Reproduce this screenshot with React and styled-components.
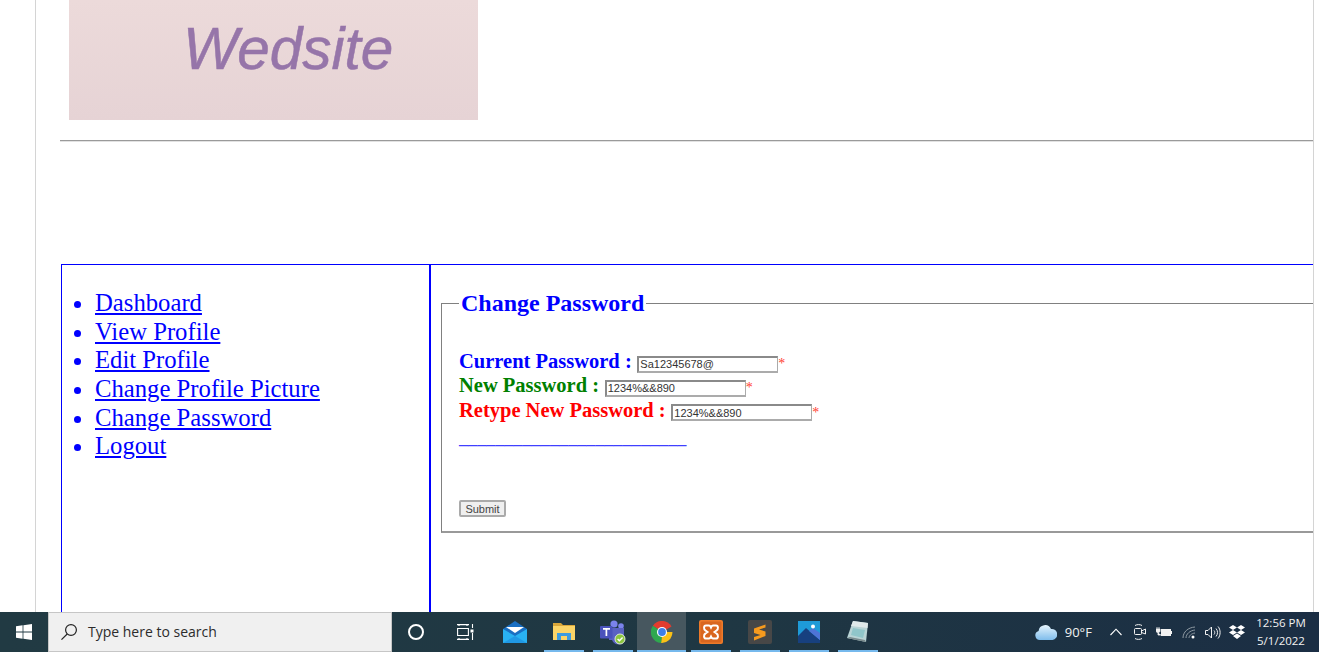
import styled, { createGlobalStyle } from 'styled-components';

const GlobalStyle = createGlobalStyle`
	html, body {
		margin: 0;
		padding: 0;
		height: 100%;
		overflow: hidden;
		background: #fff;
	}
`;

const Screen = styled.div`
	width: 1319px;
	height: 652px;
	display: flex;
	flex-direction: column;
	overflow: hidden;
	font-family: 'Liberation Serif', 'Times New Roman', serif;
`;

const Frame = styled.main`
	flex: 1;
	min-height: 0;
	width: 1277px;
	margin-left: 35px;
	border-left: 1px solid #d4d4d4;
	border-right: 1px solid #d4d4d4;
	overflow: hidden;
	display: flex;
	flex-direction: column;
`;

const Banner = styled.div`
	width: 409px;
	height: 120px;
	margin-left: 33px;
	padding: 13px 0 0 114px;
	box-sizing: border-box;
	flex-shrink: 0;
	background: linear-gradient(180deg, #ecdada 0%, #e6d3d5 100%);
	color: #9675a9;
	font: italic 58.5px/72px 'Liberation Sans', Arial, sans-serif;
	-webkit-text-stroke: 0.5px #9675a9;
	filter: blur(0.6px);
`;

const Rule = styled.hr`
	flex-shrink: 0;
	width: 100%;
	margin: 20px 0 0 24px;
	border: none;
	border-top: 1px solid #9a9a9a;
	border-bottom: 1px solid #e2e2e2;
`;

const Board = styled.div`
	flex: 1;
	min-height: 0;
	margin: 122px 0 0 25px;
	border-top: 1px solid #0000ff;
	border-left: 1px solid #0000ff;
	display: flex;
`;

const Menu = styled.nav`
	width: 367px;
	flex-shrink: 0;
	border-right: 2px solid #0000ff;
`;

const MenuList = styled.ul`
	margin: 24px 0 0;
	padding: 0 0 0 33px;
	color: #0000ff;
	font-size: 24.7px;
	line-height: 28.65px;
`;

const MenuLink = styled.a`
	color: #0000ff;
	text-decoration: underline;
`;

const Content = styled.section`
	flex: 1;
	min-width: 0;
	overflow: hidden;
	padding: 25px 0 0 10px;
`;

const PasswordSet = styled.fieldset`
	width: 1000px;
	height: 243px;
	margin: 0;
	padding: 32px 0 0 17px;
	box-sizing: border-box;
	border: 1px solid #808080;
	border-bottom: 2px solid #999;
`;

const Legend = styled.legend`
	padding: 0 2px;
	color: #0000ff;
	font-size: 24px;
	font-weight: bold;
	line-height: 27px;
`;

const Row = styled.div`
	height: 24.4px;
	white-space: nowrap;
	color: ${(p) => p.$color};
	font-size: 20.5px;
	font-weight: bold;
	line-height: 24.4px;
`;

const PasswordInput = styled.input`
	width: 141px;
	height: 17px;
	box-sizing: border-box;
	margin: 0 0 0 0.5px;
	padding: 0 1px;
	border-width: 2px 1px 2px 2px;
	border-style: solid;
	border-color: #8a8a8a #ababab #ababab #8a8a8a;
	background: #fff;
	color: #333;
	font: 11px 'Liberation Sans', Arial, sans-serif;
	vertical-align: 0;
`;

const Star = styled.span`
	color: #ff4030;
	font-size: 14px;
	font-weight: normal;
`;

const Underline = styled.div`
	margin-top: 6px;
	color: #4040ff;
	font-size: 18.2px;
	font-weight: bold;
	line-height: 20px;
`;

const SubmitButton = styled.button`
	display: block;
	width: 47px;
	height: 17px;
	margin-top: 52px;
	padding: 0;
	border: 2px solid #aaa;
	border-radius: 2px;
	background: #efefef;
	color: #444;
	font: 11px 'Liberation Sans', Arial, sans-serif;
`;

const Taskbar = styled.footer`
	height: 40px;
	flex-shrink: 0;
	display: flex;
	align-items: stretch;
	background: linear-gradient(90deg, #213a43 0%, #1f3743 55%, #1b2e44 100%);
	color: #fff;
	font-family: 'Open Sans', 'Noto Sans', sans-serif;
`;

const StartButton = styled.div`
	width: 48px;
	display: flex;
	align-items: center;
	justify-content: center;
`;

const SearchBox = styled.div`
	width: 344px;
	box-sizing: border-box;
	display: flex;
	align-items: center;
	gap: 10px;
	padding: 0 0 1px 11px;
	background: #f0f0f0;
	border: 1px solid #c6c6c6;
	color: #2c2c2c;
	font-size: 14px;
`;

const TaskIcon = styled.div`
	position: relative;
	width: 49px;
	display: flex;
	align-items: center;
	justify-content: center;
	background: ${(p) => (p.$active ? '#47575f' : 'transparent')};
	&::after {
		content: '';
		display: ${(p) => (p.$open ? 'block' : 'none')};
		position: absolute;
		bottom: 0;
		left: ${(p) => (p.$active ? '0' : '5px')};
		right: ${(p) => (p.$active ? '0' : '4px')};
		height: 2px;
		background: #76b9ed;
	}
`;

const CortanaRing = styled.div`
	width: 12px;
	height: 12px;
	margin-right: 1px;
	border: 2px solid #fff;
	border-radius: 50%;
`;

const Tray = styled.div`
	margin-left: auto;
	display: flex;
	align-items: center;
	padding-right: 6px;
	color: #f2f2f2;
`;

const TrayIcon = styled.div`
	width: 24.2px;
	display: flex;
	align-items: center;
	justify-content: center;
`;

const Weather = styled.div`
	display: flex;
	align-items: center;
	gap: 8px;
	margin-right: 12px;
	font-size: 13px;
`;

const Clock = styled.div`
	width: 64px;
	font-size: 11.5px;
	line-height: 18px;
	text-align: center;
`;

const links = ['Dashboard', 'View Profile', 'Edit Profile', 'Change Profile Picture', 'Change Password', 'Logout'];

const fields = [
	{ label: 'Current Password :', value: 'Sa12345678@', color: '#0000ff' },
	{ label: 'New Password :', value: '1234%&&890', color: '#008000' },
	{ label: 'Retype New Password :', value: '1234%&&890', color: '#ff0000' },
];

const WindowsLogo = () => (
	<svg width="16" height="16" viewBox="0 0 16 16" fill="#fff">
		<path d="M0 2.3 6.6 1.3V7.6H0zM7.4 1.2 16 0V7.6H7.4zM0 8.4H6.6V14.7L0 13.7zM7.4 8.4H16V16L7.4 14.8z" />
	</svg>
);

const SearchIcon = () => (
	<svg width="18" height="18" viewBox="0 0 18 18" fill="none" stroke="#222" strokeWidth="1.2">
		<circle cx="11" cy="7" r="5.4" />
		<path d="M7.2 11 1.5 16.6" />
	</svg>
);

const TaskViewIcon = () => (
	<svg width="17" height="16" viewBox="0 0 17 16" fill="none" stroke="#fff" strokeWidth="1.1">
		<path d="M0 .6H12M2 .6V2M10 .6V2M.6 4.5H11.4V11.5H.6zM0 15.4H12M2 14V15.4M10 14V15.4M15.5 0V4M15.5 9V16" />
		<rect x="13.5" y="5.5" width="3" height="3" fill="#fff" stroke="none" />
	</svg>
);

const MailIcon = () => (
	<svg width="24" height="22" viewBox="0 0 24 22">
		<path d="M12 0 24 8V22H0V8z" fill="#1a6fc2" />
		<path d="M0 8 12 15 24 8V22H0z" fill="#29b2f2" />
		<path d="M3 6H21L12 12z" fill="#fff" />
		<path d="M0 22 12 15 24 22z" fill="#1c8fe0" opacity=".7" />
	</svg>
);

const FolderIcon = () => (
	<svg width="22" height="18" viewBox="0 0 22 18">
		<path d="M0 0H8L10 2H22V17H0z" fill="#d9a63a" />
		<rect y="3" width="22" height="14" fill="#fbd467" />
		<path d="M4 17V10H18V17H14V13H8V17z" fill="#3d9be0" />
	</svg>
);

const TeamsIcon = () => (
	<svg width="26" height="26" viewBox="0 0 26 26">
		<circle cx="21" cy="7" r="2.8" fill="#7b83eb" />
		<circle cx="14" cy="5" r="3.6" fill="#7b83eb" />
		<path d="M9 9H24V17A6 6 0 0 1 12 21H9z" fill="#5a62c3" />
		<rect y="7" width="12.5" height="12.5" rx="1" fill="#4b53bc" />
		<path d="M3 9.8H10M6.4 9.8V17" stroke="#fff" strokeWidth="1.7" />
		<circle cx="20" cy="20" r="5" fill="#8cc63f" stroke="#dfe8d8" />
		<path d="M17.6 20 19.4 21.8 22.6 18.5" fill="none" stroke="#fff" strokeWidth="1.4" />
	</svg>
);

const ChromeIcon = () => (
	<svg width="22" height="22" viewBox="0 0 48 48">
		<path d="M24 24 44.8 12A24 24 0 0 0 4.2 10.2z" fill="#e33b2e" />
		<path d="M24 24H46.8A24 24 0 0 1 22 48z" fill="#fbc116" />
		<path d="M24 24 22 48A24 24 0 0 1 4.2 10.2z" fill="#2fa84f" />
		<circle cx="24" cy="24" r="11" fill="#fff" />
		<circle cx="24" cy="24" r="8.5" fill="#3f7fe8" />
	</svg>
);

const XamppIcon = () => (
	<svg width="24" height="24" viewBox="0 0 24 24">
		<rect width="24" height="24" rx="2" fill="#ed7a2a" />
		<rect x="1.5" y="1.5" width="21" height="21" rx="1.5" fill="#d9661f" />
		<path d="M7 5.500H10C11.200 5.500 11.500 6.500 12 7.500 12.500 6.500 12.800 5.500 14 5.500H17C19.500 5.500 19.500 9.500 17.500 10.500L15.500 12 17.500 13.500C19.500 14.500 19.500 18.500 17 18.500H14C12.800 18.500 12.500 17.500 12 16.500 11.500 17.500 11.200 18.500 10 18.500H7C4.500 18.500 4.500 14.500 6.500 13.500L8.500 12 6.500 10.500C4.500 9.500 4.500 5.500 7 5.500Z" fill="none" stroke="#fff" strokeWidth="2" />
	</svg>
);

const SublimeIcon = () => (
	<svg width="24" height="24" viewBox="0 0 24 24">
		<rect width="24" height="24" rx="2" fill="#474747" />
		<path d="M17.500 4.500 6 8.500V12.500L17.500 16.500V20L6 16V13L14 15.500 6 12.500" fill="none" />
		<path d="M17.500 4.500 6 8.500V13L12.500 15 6 17V20.500L17.500 16V11.500L11 9.500 17.500 7.500z" fill="#f79a1e" />
	</svg>
);

const PhotosIcon = () => (
	<svg width="22" height="22" viewBox="0 0 22 22">
		<rect width="22" height="22" fill="#1e9bd8" />
		<path d="M0 15 8 7 22 19V22H0z" fill="#17407f" />
		<path d="M11 10 15 7 22 12V19z" fill="#4e74d6" />
		<circle cx="15" cy="5.5" r="2" fill="#fff" />
	</svg>
);

const NotesIcon = () => (
	<svg width="24" height="24" viewBox="0 0 24 24">
		<path d="M7 1 22 3 20 22 1 18z" fill="#b8d4d6" />
		<path d="M7 1 22 3 21.5 8 5 6z" fill="#dfe9ea" />
		<path d="M4 17 19 20 20 22 1 18z" fill="#7a8a8d" />
		<path d="M7 8 19 10 17 18 5 15z" fill="#7fc0c4" opacity=".7" />
	</svg>
);

const CloudIcon = () => (
	<svg width="22" height="16" viewBox="0 0 22 16">
		<defs>
			<linearGradient id="cloudFill" x1="0" y1="0" x2="0" y2="1">
				<stop offset="0" stopColor="#e4f3fc" />
				<stop offset="1" stopColor="#7fbdec" />
			</linearGradient>
		</defs>
		<path d="M5 16A4.6 4.6 0 0 1 3.600 7 6.500 6.500 0 0 1 16 5 5.400 5.400 0 0 1 17.500 16z" fill="url(#cloudFill)" />
	</svg>
);

const ChevronIcon = () => (
	<svg width="12" height="8" viewBox="0 0 12 8" fill="none" stroke="#fff" strokeWidth="1.1">
		<path d="M.5 7 6 1.200 11.500 7" />
	</svg>
);

const MeetIcon = () => (
	<svg width="12" height="16" viewBox="0 0 12 16" fill="none" stroke="#f2f2f2" strokeWidth="1">
		<rect x=".5" y="4.500" width="7" height="6" rx="1" />
		<path d="M7.500 7 11.500 5V10L7.500 8.500M1 1.500C3 .3 6 .3 8 1.500M1 14.500C3 15.700 6 15.700 8 14.500" />
	</svg>
);

const BatteryIcon = () => (
	<svg width="16" height="10" viewBox="0 0 16 10">
		<path d="M1 0V2M3 0V2M0 2H4V4C4 5 3 5.500 2 5.500 1 5.500 0 5 0 4zM2 5.500V8H5" fill="#f2f2f2" stroke="#f2f2f2" strokeWidth=".8" />
		<rect x="5.500" y="2.500" width="9" height="6" fill="#f2f2f2" stroke="#f2f2f2" />
		<rect x="15" y="4" width="1" height="3" fill="#f2f2f2" />
	</svg>
);

const WifiIcon = () => (
	<svg width="14" height="13" viewBox="0 0 14 13" fill="none" stroke="#8f9aa3" strokeWidth="1">
		<path d="M1 12C1 6 6 1.500 13 1M4 12C4 8 8 4.500 13 4M7 12C7 10 9 7.500 13 7" />
		<circle cx="11" cy="11" r="1.500" fill="#fff" stroke="none" />
	</svg>
);

const VolumeIcon = () => (
	<svg width="16" height="13" viewBox="0 0 16 13" fill="none" stroke="#f2f2f2" strokeWidth="1">
		<path d="M.5 4.500H3L6.500 1V12L3 8.500H.5zM9 4.500C10 5.500 10 7.500 9 8.500M11 2.500C13 4.500 13 8.500 11 10.500M13 .5C15.800 3.500 15.800 9.500 13 12.500" />
	</svg>
);

const DropboxIcon = () => (
	<svg width="16" height="14" viewBox="0 0 16 14" fill="#fff">
		<path d="M4 0 8 2.500 4 5 0 2.500zM12 0 16 2.500 12 5 8 2.500zM0 7.500 4 5 8 7.500 4 10zM12 5 16 7.500 12 10 8 7.500zM4 11 8 8.500 12 11 8 14z" />
	</svg>
);

const App = () => (
	<Screen>
		<GlobalStyle />
		<Frame>
			<Banner>Wedsite</Banner>
			<Rule />
			<Board>
				<Menu>
					<MenuList>
						{links.map((link) => (
							<li key={link}>
								<MenuLink href="#">{link}</MenuLink>
							</li>
						))}
					</MenuList>
				</Menu>
				<Content>
					<PasswordSet>
						<Legend>Change Password</Legend>
						{fields.map((field) => (
							<Row key={field.label} $color={field.color}>
								{field.label} <PasswordInput defaultValue={field.value} />
								<Star>*</Star>
							</Row>
						))}
						<Underline>_________________________</Underline>
						<SubmitButton>Submit</SubmitButton>
					</PasswordSet>
				</Content>
			</Board>
		</Frame>
		<Taskbar>
			<StartButton>
				<WindowsLogo />
			</StartButton>
			<SearchBox>
				<SearchIcon />
				Type here to search
			</SearchBox>
			<TaskIcon>
				<CortanaRing />
			</TaskIcon>
			<TaskIcon>
				<TaskViewIcon />
			</TaskIcon>
			<TaskIcon>
				<MailIcon />
			</TaskIcon>
			<TaskIcon $open>
				<FolderIcon />
			</TaskIcon>
			<TaskIcon $open>
				<TeamsIcon />
			</TaskIcon>
			<TaskIcon $open $active>
				<ChromeIcon />
			</TaskIcon>
			<TaskIcon $open>
				<XamppIcon />
			</TaskIcon>
			<TaskIcon $open>
				<SublimeIcon />
			</TaskIcon>
			<TaskIcon $open>
				<PhotosIcon />
			</TaskIcon>
			<TaskIcon $open>
				<NotesIcon />
			</TaskIcon>
			<Tray>
				<Weather>
					<CloudIcon />
					90°F
				</Weather>
				<TrayIcon>
					<ChevronIcon />
				</TrayIcon>
				<TrayIcon>
					<MeetIcon />
				</TrayIcon>
				<TrayIcon>
					<BatteryIcon />
				</TrayIcon>
				<TrayIcon>
					<WifiIcon />
				</TrayIcon>
				<TrayIcon>
					<VolumeIcon />
				</TrayIcon>
				<TrayIcon>
					<DropboxIcon />
				</TrayIcon>
				<Clock>
					12:56 PM
					<br />
					5/1/2022
				</Clock>
			</Tray>
		</Taskbar>
	</Screen>
);

export default App;
